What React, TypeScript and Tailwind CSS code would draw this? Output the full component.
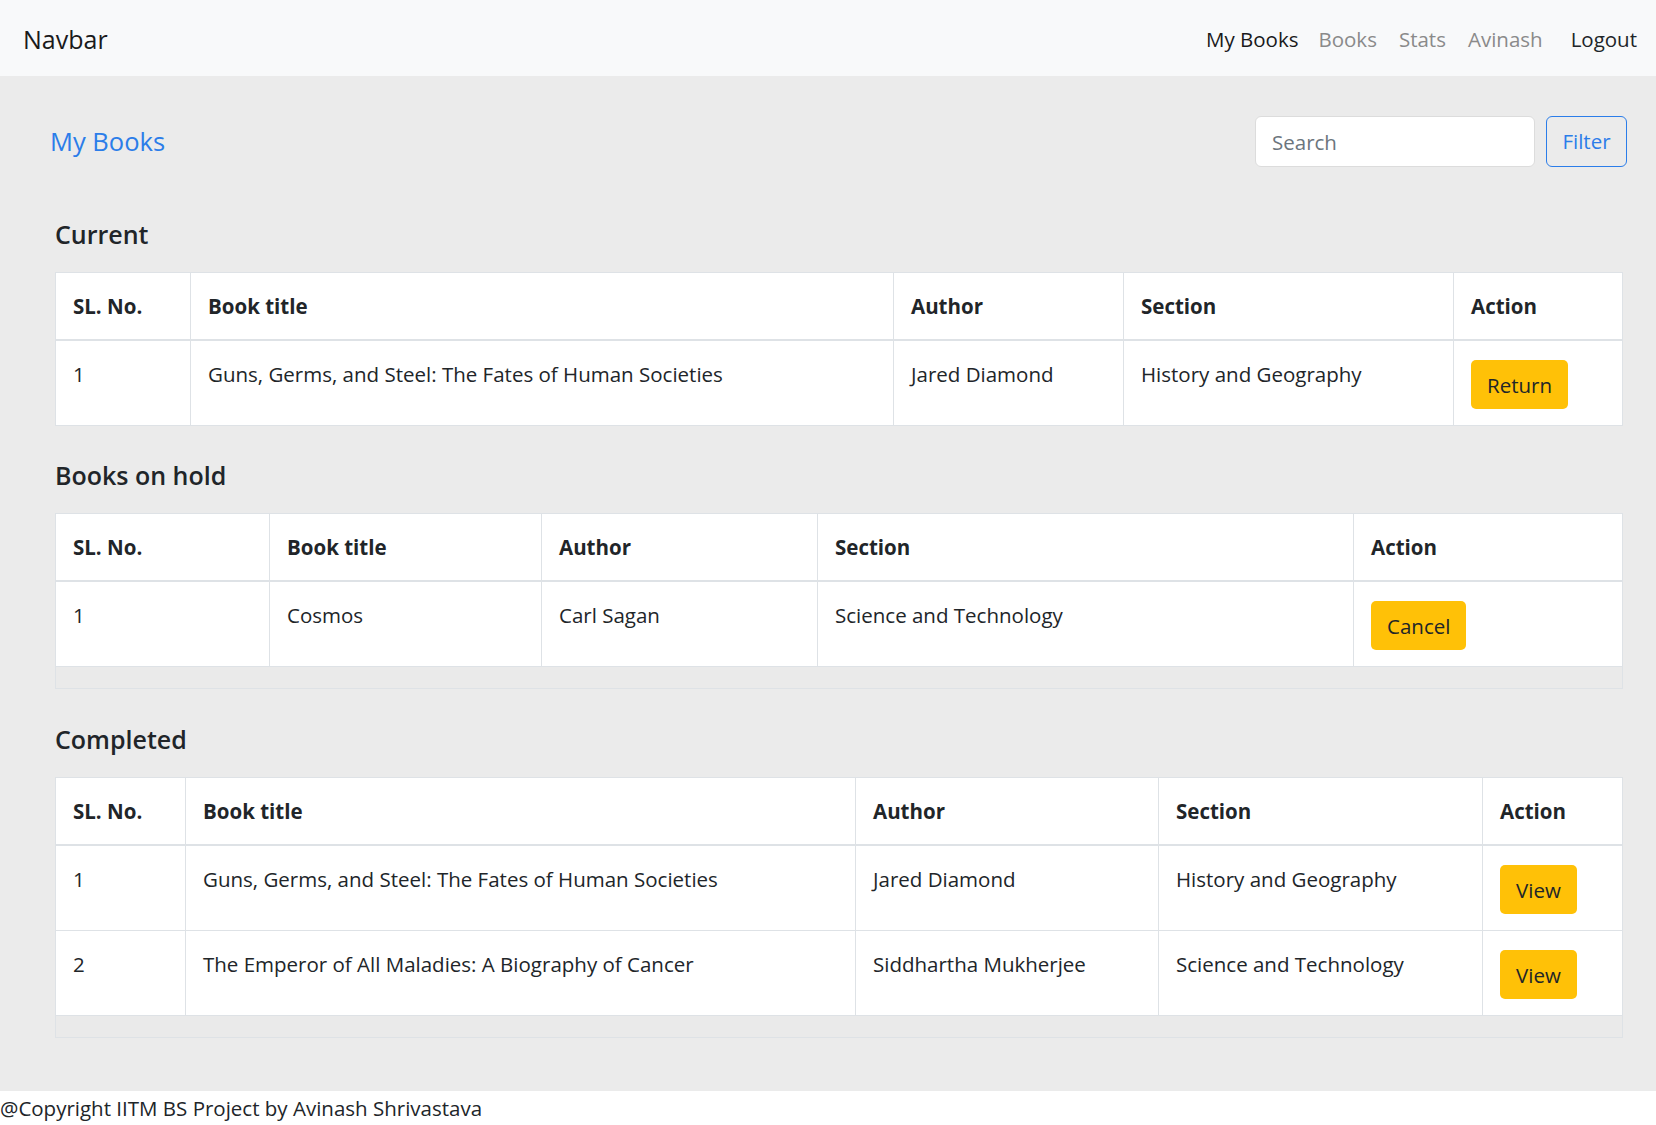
import React from 'react';

type Col = { label: string; w: string };
type Row = { sl: string; title: string; author: string; section: string };

const font = "font-['Open_Sans',sans-serif]";
const cell = 'align-top px-[17px] pt-[17px] pb-[16px] leading-[32px] border-x border-[#dee2e6]';

const BookTable: React.FC<{ cols: Col[]; rows: Row[]; action: string; strip?: boolean }> = ({
  cols,
  rows,
  action,
  strip,
}) => {
  return (
    <table className="w-full table-fixed border-collapse bg-white border border-[#dee2e6]">
      <colgroup>
        {cols.map((c) => (
          <col key={c.label} className={c.w} />
        ))}
      </colgroup>
      <thead>
        <tr className="border-b-2 border-[#dee2e6]">
          {cols.map((c) => (
            <th
              key={c.label}
              className="text-left align-top font-bold px-[17px] py-[17px] leading-[32px] border-x border-[#dee2e6]"
            >
              {c.label}
            </th>
          ))}
        </tr>
      </thead>
      <tbody>
        {rows.map((r) => (
          <tr key={r.sl} className="border-b border-[#dee2e6]">
            <td className={cell}>{r.sl}</td>
            <td className={cell}>{r.title}</td>
            <td className={cell}>{r.author}</td>
            <td className={cell}>{r.section}</td>
            <td className={cell}>
              <button className="mt-[2px] h-[49px] px-[16px] rounded-[5px] bg-[#ffc107] text-[#212529] text-[20.5px]">
                {action}
              </button>
            </td>
          </tr>
        ))}
      </tbody>
      {strip && (
        <tfoot>
          <tr>
            <td colSpan={5} className="h-[22px] bg-[#eaeaea] border border-[#dee2e6]" />
          </tr>
        </tfoot>
      )}
    </table>
  );
};

export default function App() {
  const current: Col[] = [
    { label: 'SL. No.', w: 'w-[135px]' },
    { label: 'Book title', w: 'w-[703px]' },
    { label: 'Author', w: 'w-[230px]' },
    { label: 'Section', w: 'w-[330px]' },
    { label: 'Action', w: 'w-[169px]' },
  ];
  const hold: Col[] = [
    { label: 'SL. No.', w: 'w-[214px]' },
    { label: 'Book title', w: 'w-[272px]' },
    { label: 'Author', w: 'w-[276px]' },
    { label: 'Section', w: 'w-[536px]' },
    { label: 'Action', w: 'w-[269px]' },
  ];
  const completed: Col[] = [
    { label: 'SL. No.', w: 'w-[130px]' },
    { label: 'Book title', w: 'w-[670px]' },
    { label: 'Author', w: 'w-[303px]' },
    { label: 'Section', w: 'w-[324px]' },
    { label: 'Action', w: 'w-[140px]' },
  ];

  return (
    <div className={`${font} text-[20.5px] text-[#212529] min-h-screen flex flex-col`}>
      {/* navbar */}
      <nav className="h-[76px] bg-[#f8f9fa] flex items-center justify-between pl-[23px] pr-[19px]">
        <span className="mt-[3px] text-[25px] text-[#1a1a1a]">Navbar</span>
        <div className="mt-[2px] flex items-center">
          <a className="text-[#1a1a1a] mr-[20px]">My Books</a>
          <a className="text-[#8a8a8a] mr-[22px]">Books</a>
          <a className="text-[#8a8a8a] mr-[22px]">Stats</a>
          <a className="text-[#8a8a8a] mr-[28px]">Avinash</a>
          <a className="text-[#212529]">Logout</a>
        </div>
      </nav>

      <main className="flex-1 bg-[#ebebeb] pt-[40px] pb-[40px]">
        <div className="flex items-center justify-between h-[51px] pl-[50px] pr-[29px]">
          <h2 className="text-[25.5px] text-[#2b7de9]">My Books</h2>
          <div className="flex gap-[11px]">
            <input
              placeholder="Search"
              className="w-[280px] h-[51px] bg-white border border-[#dcdcdc] rounded-[6px] px-[16px] text-[20.5px] placeholder:text-[#6c757d] outline-none"
            />
            <button className="w-[81px] h-[51px] border border-[#2b7de9] rounded-[6px] text-[#2b7de9] text-[20.5px]">
              Filter
            </button>
          </div>
        </div>

        <section className="pl-[55px] pr-[34px]">
          <h3 className="mt-[51px] mb-[22px] text-[25px] leading-[32px] font-semibold">Current</h3>
          <BookTable
            cols={current}
            action="Return"
            rows={[
              {
                sl: '1',
                title: 'Guns, Germs, and Steel: The Fates of Human Societies',
                author: 'Jared Diamond',
                section: 'History and Geography',
              },
            ]}
          />

          <h3 className="mt-[33px] mb-[22px] text-[25px] leading-[32px] font-semibold">Books on hold</h3>
          <BookTable
            cols={hold}
            action="Cancel"
            strip
            rows={[{ sl: '1', title: 'Cosmos', author: 'Carl Sagan', section: 'Science and Technology' }]}
          />

          <h3 className="mt-[34px] mb-[22px] text-[25px] leading-[32px] font-semibold">Completed</h3>
          <BookTable
            cols={completed}
            action="View"
            strip
            rows={[
              {
                sl: '1',
                title: 'Guns, Germs, and Steel: The Fates of Human Societies',
                author: 'Jared Diamond',
                section: 'History and Geography',
              },
              {
                sl: '2',
                title: 'The Emperor of All Maladies: A Biography of Cancer',
                author: 'Siddhartha Mukherjee',
                section: 'Science and Technology',
              },
            ]}
          />
        </section>
      </main>

      <footer className="h-[34px] bg-white leading-[34px]">@Copyright IITM BS Project by Avinash Shrivastava</footer>
    </div>
  );
}
